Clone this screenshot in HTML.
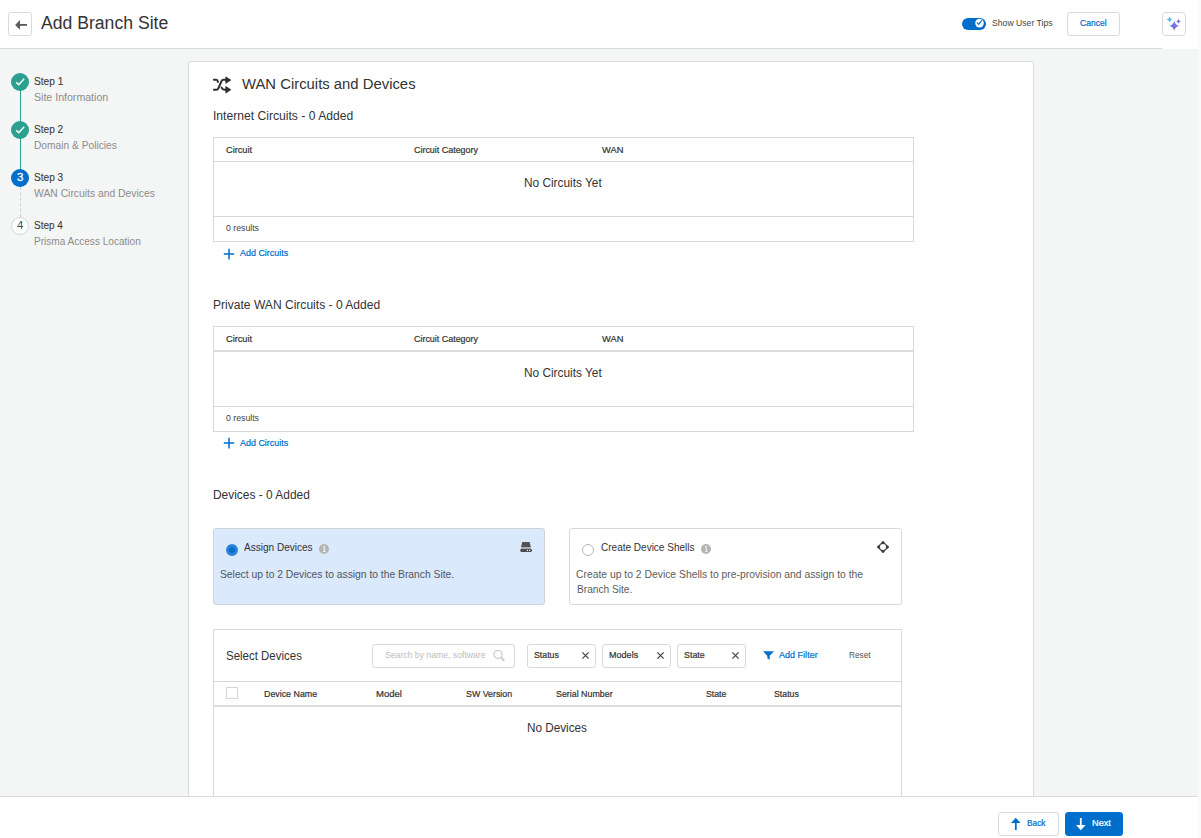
<!DOCTYPE html>
<html lang="en">
<head>
<meta charset="utf-8">
<title>Add Branch Site</title>
<style>
*{box-sizing:border-box;margin:0;padding:0}
html,body{width:1201px;height:838px;overflow:hidden}
body{position:relative;background:#f4f5f5;font-family:"Liberation Sans",sans-serif;color:#333}
.abs{position:absolute}
.t{position:absolute;white-space:nowrap;line-height:1;transform-origin:0 0;display:block}
.sb{-webkit-text-stroke:0.22px currentColor}
.sl{-webkit-text-stroke:0.12px currentColor}
.hdr{position:absolute;left:0;top:0;width:1162px;height:49px;background:#fff;border-bottom:1px solid #d9dbdb}
.hdr-r{position:absolute;left:1162px;top:0;width:36px;height:49px;background:#fff}
.scroll{position:absolute;left:1198px;top:0;width:3px;height:838px;background:#fafafa}
.btn{position:absolute;background:#fff;border:1px solid #d9dbdb;border-radius:3px}
.panel{position:absolute;left:188px;top:61px;width:846px;height:760px;background:#fff;border:1px solid #dcdddd;border-radius:3px}
.tbl{position:absolute;border:1px solid #d8dada;background:#fff}
.hl{position:absolute;background:#d8dada;height:1px}
.footer{position:absolute;left:0;top:796px;width:1198px;height:42px;background:#fff;border-top:1px solid #d9dbdb}
.circ{position:absolute;width:18px;height:18px;border-radius:50%}
.card{position:absolute;border:1px solid #d8dada;border-radius:3px;background:#fff}
.fbox{position:absolute;top:644.4px;height:23.2px;border:1px solid #d8dada;border-radius:3px;background:#fff}
svg{position:absolute;overflow:visible}
</style>
</head>
<body>

<!-- ===== header ===== -->
<div class="hdr"></div>
<div class="hdr-r"></div>
<div class="btn" style="left:8px;top:12px;width:24px;height:24px"></div>
<svg style="left:8px;top:12px" width="24" height="24" viewBox="0 0 24 24"><path d="M7.1 12.9 L12 8.1 V17.7 Z" fill="#5c5c5c"/><path d="M11.5 12.9 H19" stroke="#5c5c5c" stroke-width="1.9" fill="none"/></svg>
<!-- toggle -->
<div class="abs" style="left:962px;top:18px;width:24px;height:12px;border-radius:6px;background:#006fcc"></div>
<svg style="left:974px;top:18px" width="12" height="12" viewBox="0 0 12 12"><circle cx="5.5" cy="5.1" r="4.3" fill="#fff"/><path d="M2.9 4.4 L4.6 6.4 L7.8 2.3" stroke="#006fcc" stroke-width="1.1" fill="none"/></svg>
<div class="btn" style="left:1067.4px;top:12.2px;width:52.4px;height:23.4px"></div>
<div class="btn" style="left:1162px;top:12px;width:24px;height:24px;border-radius:4px"></div>
<svg style="left:1162px;top:12px" width="24" height="24" viewBox="0 0 24 24">
<defs><linearGradient id="g1" x1="0" y1="0" x2="1" y2="1"><stop offset="0.1" stop-color="#4796e4"/><stop offset="0.6" stop-color="#7c6ce0"/><stop offset="1" stop-color="#9a45e0"/></linearGradient></defs>
<path d="M7.60 4.40 Q8.13 6.97 10.70 7.50 Q8.13 8.03 7.60 10.60 Q7.07 8.03 4.50 7.50 Q7.07 6.97 7.60 4.40Z" fill="#47bfe0"/>
<path d="M16.50 7.10 Q16.89 9.01 18.80 9.40 Q16.89 9.79 16.50 11.70 Q16.11 9.79 14.20 9.40 Q16.11 9.01 16.50 7.10Z" fill="#7668dd"/>
<path d="M12.20 8.90 Q13.18 12.82 17.10 13.80 Q13.18 14.78 12.20 18.70 Q11.22 14.78 7.30 13.80 Q11.22 12.82 12.20 8.90Z" fill="url(#g1)"/>
</svg>
<span class="t" style="left:41.0px;top:13.66px;font-size:18px;color:#333333;transform:scaleX(0.9782)">Add Branch Site</span>
<span class="t" style="left:992.0px;top:18.04px;font-size:9.4px;color:#444444;transform:scaleX(0.9223)">Show User Tips</span>
<span class="t sb" style="left:1080.0px;top:18.04px;font-size:9.4px;color:#006fcc;transform:scaleX(0.9095)">Cancel</span>

<!-- ===== sidebar steps ===== -->
<div class="abs" style="left:19.5px;top:90px;width:1.2px;height:80px;background:#2ba08f"></div>
<div class="abs" style="left:19.6px;top:187px;width:0;height:30px;border-left:1px dashed #cdcfcf"></div>
<div class="circ" style="left:11px;top:73px;background:#2ba08f"></div>
<div class="circ" style="left:11px;top:121px;background:#2ba08f"></div>
<div class="circ" style="left:11px;top:169px;background:#006fcc"></div>
<div class="circ" style="left:11px;top:217px;background:#fff;border:1px solid #d4d6d6"></div>
<svg style="left:11px;top:73px" width="18" height="18" viewBox="0 0 18 18"><path d="M5.2 9.3 L7.7 11.7 L13.2 5.7" stroke="#fff" stroke-width="1.5" fill="none"/></svg>
<svg style="left:11px;top:121px" width="18" height="18" viewBox="0 0 18 18"><path d="M5.2 9.3 L7.7 11.7 L13.2 5.7" stroke="#fff" stroke-width="1.5" fill="none"/></svg>
<span class="t" style="left:16.9px;top:172px;font-size:11.5px;color:#fff;-webkit-text-stroke:0.3px #fff">3</span>
<span class="t" style="left:16.9px;top:220px;font-size:11.5px;color:#4a4a4a">4</span>
<span class="t sl" style="left:34.0px;top:76.32px;font-size:11.2px;color:#3c3c3c;transform:scaleX(0.9059)">Step 1</span>
<span class="t" style="left:34.0px;top:92.49px;font-size:11px;color:#8c8c8c;transform:scaleX(0.9630)">Site Information</span>
<span class="t sl" style="left:34.0px;top:124.32px;font-size:11.2px;color:#3c3c3c;transform:scaleX(0.9038)">Step 2</span>
<span class="t" style="left:34.0px;top:140.49px;font-size:11px;color:#8c8c8c;transform:scaleX(0.9281)">Domain &amp; Policies</span>
<span class="t sl" style="left:34.0px;top:172.32px;font-size:11.2px;color:#3c3c3c;transform:scaleX(0.9012)">Step 3</span>
<span class="t" style="left:34.0px;top:188.49px;font-size:11px;color:#8c8c8c;transform:scaleX(0.9405)">WAN Circuits and Devices</span>
<span class="t sl" style="left:34.0px;top:220.32px;font-size:11.2px;color:#3c3c3c;transform:scaleX(0.8895)">Step 4</span>
<span class="t" style="left:34.0px;top:236.49px;font-size:11px;color:#8c8c8c;transform:scaleX(0.9140)">Prisma Access Location</span>

<!-- ===== main panel ===== -->
<div class="panel"></div>
<svg style="left:205px;top:68px" width="40" height="32" viewBox="0 0 40 32">
<g stroke="#2e2e2e" stroke-width="2" fill="none" stroke-linecap="round" stroke-linejoin="round">
<path d="M8.9 11.85 H11.2 Q12.5 11.85 13 13.9"/>
<path d="M8.9 21.75 H11.4 Q12.7 21.75 13.3 20.5 L16.5 13.1 Q17.1 11.85 18.4 11.85 H21.5"/>
<path d="M16.6 19.6 Q17.6 21.75 19.6 21.75 H21.5"/>
</g>
<path d="M20.8 8.9 L25.8 12.1 L20.8 15.3 Z" fill="#2e2e2e" stroke="#2e2e2e" stroke-width="0.8" stroke-linejoin="round"/>
<path d="M20.8 18.5 L25.8 21.75 L20.8 25 Z" fill="#2e2e2e" stroke="#2e2e2e" stroke-width="0.8" stroke-linejoin="round"/>
</svg>

<!-- table 1 -->
<div class="tbl" style="left:213px;top:137px;width:701px;height:105px"></div>
<div class="hl" style="left:214px;top:161px;width:699px"></div>
<div class="hl" style="left:214px;top:216px;width:699px"></div>
<svg style="left:223.2px;top:248.1px" width="12" height="12" viewBox="0 0 12 12"><path d="M6 0.8 V11.4 M0.8 6.1 H11.2" stroke="#006fcc" stroke-width="1.5" fill="none"/></svg>
<!-- table 2 -->
<div class="tbl" style="left:213px;top:326px;width:701px;height:106px"></div>
<div class="hl" style="left:214px;top:350px;width:699px;height:2px;background:#dcdcdc"></div>
<div class="hl" style="left:214px;top:406px;width:699px"></div>
<svg style="left:223.2px;top:437.2px" width="12" height="12" viewBox="0 0 12 12"><path d="M6 0.8 V11.4 M0.8 6.1 H11.2" stroke="#006fcc" stroke-width="1.5" fill="none"/></svg>

<!-- cards -->
<div class="card" style="left:213px;top:528px;width:332px;height:77px;background:#dbe9fc;border-color:#cdd3db"></div>
<div class="abs" style="left:226px;top:544px;width:12px;height:12px;border-radius:50%;background:#006fcc;border:3px solid #2a84d6"></div>
<svg style="left:319px;top:544px" width="10" height="10" viewBox="0 0 10 10"><circle cx="5" cy="5" r="5" fill="#b5b5b5"/><path d="M4.1 4.2 H5.6 V7.2 M4 7.4 H6.4" stroke="#fff" stroke-width="0.9" fill="none"/><circle cx="5" cy="2.6" r="0.8" fill="#fff"/></svg>
<svg style="left:519px;top:541px" width="14" height="12" viewBox="0 0 14 12"><path d="M3.6 1.1 H10.2 Q10.7 1.1 10.8 1.6 L11.9 6.2 H2 L3.1 1.6 Q3.2 1.1 3.6 1.1Z" fill="#545454"/><rect x="2.2" y="6.2" width="9.6" height="1.8" fill="#a4abb8"/><rect x="1.2" y="7.9" width="11.8" height="3" rx="1.3" fill="#4c4c4c"/><circle cx="8.4" cy="9.4" r="0.65" fill="#fff"/><circle cx="10.6" cy="9.4" r="0.65" fill="#fff"/></svg>

<div class="card" style="left:569px;top:528px;width:333px;height:77px"></div>
<div class="abs" style="left:582px;top:544px;width:12px;height:12px;border-radius:50%;background:#fff;border:1px solid #b8b8b8"></div>
<svg style="left:701px;top:544px" width="10" height="10" viewBox="0 0 10 10"><circle cx="5" cy="5" r="5" fill="#b5b5b5"/><path d="M4.1 4.2 H5.6 V7.2 M4 7.4 H6.4" stroke="#fff" stroke-width="0.9" fill="none"/><circle cx="5" cy="2.6" r="0.8" fill="#fff"/></svg>
<svg style="left:876px;top:540px" width="14" height="14" viewBox="0 0 14 14"><path fill-rule="evenodd" fill="#404040" d="M7 1 Q7.8 1 8.3 1.9 Q9.6 4.3 12.1 5.7 Q13 6.2 13 7 Q13 7.8 12.1 8.3 Q9.6 9.7 8.3 12.1 Q7.8 13 7 13 Q6.2 13 5.7 12.1 Q4.4 9.7 1.9 8.3 Q1 7.8 1 7 Q1 6.2 1.9 5.7 Q4.4 4.3 5.7 1.9 Q6.2 1 7 1Z M7 4 A3 3 0 1 0 7 10 A3 3 0 1 0 7 4Z"/></svg>

<!-- select devices -->
<div class="tbl" style="left:213px;top:629px;width:689px;height:200px"></div>
<div class="fbox" style="left:372.4px;width:142.4px"></div>
<svg style="left:493px;top:649px" width="13" height="13" viewBox="0 0 13 13"><circle cx="5" cy="5.4" r="4" stroke="#cdcdcd" stroke-width="1.3" fill="none"/><path d="M8.3 8.8 L10.8 11.4" stroke="#cdcdcd" stroke-width="2" stroke-linecap="round"/></svg>
<div class="fbox" style="left:527.4px;width:68.6px"></div>
<div class="fbox" style="left:602.2px;width:68.6px"></div>
<div class="fbox" style="left:677.1px;width:68.6px"></div>
<svg style="left:582.4px;top:652.4px" width="7" height="7" viewBox="0 0 7 7"><path d="M0.4 0.4 L6.6 6.6 M6.6 0.4 L0.4 6.6" stroke="#484848" stroke-width="1.3"/></svg>
<svg style="left:657.4px;top:652.4px" width="7" height="7" viewBox="0 0 7 7"><path d="M0.4 0.4 L6.6 6.6 M6.6 0.4 L0.4 6.6" stroke="#484848" stroke-width="1.3"/></svg>
<svg style="left:732.4px;top:652.4px" width="7" height="7" viewBox="0 0 7 7"><path d="M0.4 0.4 L6.6 6.6 M6.6 0.4 L0.4 6.6" stroke="#484848" stroke-width="1.3"/></svg>
<svg style="left:762.6px;top:650.6px" width="11" height="9" viewBox="0 0 11 9"><path d="M0.6 0.2 H10.4 Q10.9 0.2 10.6 0.7 L6.7 4.7 V8.8 L4.3 7.3 V4.7 L0.4 0.7 Q0.1 0.2 0.6 0.2Z" fill="#006fcc"/></svg>
<div class="hl" style="left:214px;top:681px;width:687px"></div>
<div class="hl" style="left:214px;top:705px;width:687px;height:2px;background:#dcdcdc"></div>
<div class="abs" style="left:226px;top:687.4px;width:11.8px;height:11.6px;background:#fff;border:1px solid #d4d6d6;border-radius:0"></div>
<span class="t" style="left:242.0px;top:75.88px;font-size:15.5px;color:#333333;transform:scaleX(0.9580)">WAN Circuits and Devices</span>
<span class="t" style="left:213.0px;top:109.62px;font-size:12.5px;color:#333333;transform:scaleX(0.9703)">Internet Circuits - 0 Added</span>
<span class="t" style="left:213.0px;top:298.82px;font-size:12.5px;color:#333333;transform:scaleX(0.9652)">Private WAN Circuits - 0 Added</span>
<span class="t" style="left:213.0px;top:489.02px;font-size:12.5px;color:#333333;transform:scaleX(0.9542)">Devices - 0 Added</span>
<span class="t sb" style="left:226.0px;top:144.70px;font-size:9.8px;color:#333333;transform:scaleX(0.9387)">Circuit</span>
<span class="t sb" style="left:414.0px;top:144.70px;font-size:9.8px;color:#333333;transform:scaleX(0.9109)">Circuit Category</span>
<span class="t sb" style="left:602.0px;top:144.70px;font-size:9.8px;color:#333333;transform:scaleX(0.9531)">WAN</span>
<span class="t" style="left:524.0px;top:176.50px;font-size:12.4px;color:#333333;transform:scaleX(0.9559)">No Circuits Yet</span>
<span class="t" style="left:226.0px;top:222.70px;font-size:9.8px;color:#444444;transform:scaleX(0.8905)">0 results</span>
<span class="t sb" style="left:240.0px;top:248.04px;font-size:9.4px;color:#006fcc;transform:scaleX(0.9545)">Add Circuits</span>
<span class="t sb" style="left:226.0px;top:333.70px;font-size:9.8px;color:#333333;transform:scaleX(0.9387)">Circuit</span>
<span class="t sb" style="left:414.0px;top:333.70px;font-size:9.8px;color:#333333;transform:scaleX(0.9109)">Circuit Category</span>
<span class="t sb" style="left:602.0px;top:333.70px;font-size:9.8px;color:#333333;transform:scaleX(0.9531)">WAN</span>
<span class="t" style="left:524.0px;top:366.50px;font-size:12.4px;color:#333333;transform:scaleX(0.9559)">No Circuits Yet</span>
<span class="t" style="left:226.0px;top:412.70px;font-size:9.8px;color:#444444;transform:scaleX(0.8905)">0 results</span>
<span class="t sb" style="left:240.0px;top:438.04px;font-size:9.4px;color:#006fcc;transform:scaleX(0.9545)">Add Circuits</span>
<span class="t" style="left:244.0px;top:541.69px;font-size:11px;color:#333333;transform:scaleX(0.9122)">Assign Devices</span>
<span class="t" style="left:220.0px;top:568.52px;font-size:11.2px;color:#50555f;transform:scaleX(0.9205)">Select up to 2 Devices to assign to the Branch Site.</span>
<span class="t" style="left:601.0px;top:541.69px;font-size:11px;color:#333333;transform:scaleX(0.9101)">Create Device Shells</span>
<span class="t" style="left:576.0px;top:568.52px;font-size:11.2px;color:#5c5c5c;transform:scaleX(0.9252)">Create up to 2 Device Shells to pre-provision and assign to the</span>
<span class="t" style="left:577.0px;top:583.52px;font-size:11.2px;color:#5c5c5c;transform:scaleX(0.9078)">Branch Site.</span>
<span class="t" style="left:226.0px;top:648.80px;font-size:13px;color:#333333;transform:scaleX(0.8826)">Select Devices</span>
<span class="t" style="left:385.0px;top:650.10px;font-size:9.8px;color:#bdbdbd;transform:scaleX(0.8837)">Search by name, software</span>
<span class="t sb" style="left:534.0px;top:650.10px;font-size:9.8px;color:#333333;transform:scaleX(0.8946)">Status</span>
<span class="t sb" style="left:609.0px;top:650.10px;font-size:9.8px;color:#333333;transform:scaleX(0.9237)">Models</span>
<span class="t sb" style="left:684.0px;top:650.10px;font-size:9.8px;color:#333333;transform:scaleX(0.9056)">State</span>
<span class="t sb" style="left:779.0px;top:650.44px;font-size:9.4px;color:#006fcc;transform:scaleX(0.9640)">Add Filter</span>
<span class="t" style="left:849.0px;top:650.44px;font-size:9.4px;color:#505050;transform:scaleX(0.8835)">Reset</span>
<span class="t sb" style="left:264.0px;top:688.70px;font-size:9.8px;color:#333333;transform:scaleX(0.9030)">Device Name</span>
<span class="t sb" style="left:376.0px;top:688.70px;font-size:9.8px;color:#333333;transform:scaleX(0.9734)">Model</span>
<span class="t sb" style="left:466.0px;top:688.70px;font-size:9.8px;color:#333333;transform:scaleX(0.9000)">SW Version</span>
<span class="t sb" style="left:556.0px;top:688.70px;font-size:9.8px;color:#333333;transform:scaleX(0.9037)">Serial Number</span>
<span class="t sb" style="left:706.0px;top:688.70px;font-size:9.8px;color:#333333;transform:scaleX(0.8904)">State</span>
<span class="t sb" style="left:774.0px;top:688.70px;font-size:9.8px;color:#333333;transform:scaleX(0.8946)">Status</span>
<span class="t" style="left:527.0px;top:722.20px;font-size:12.4px;color:#333333;transform:scaleX(0.9465)">No Devices</span>

<!-- ===== footer ===== -->
<div class="footer"></div>
<div class="btn" style="left:998.2px;top:812.2px;width:60.4px;height:23.4px"></div>
<div class="btn" style="left:1064.9px;top:812.2px;width:58px;height:23.4px;background:#006fcc;border-color:#006fcc"></div>
<svg style="left:1010px;top:817px" width="12" height="14" viewBox="0 0 12 14"><path d="M5.8 13 V3" stroke="#006fcc" stroke-width="1.8" fill="none"/><path d="M1 6 L5.8 0.8 L10.6 6 Z" fill="#006fcc"/></svg>
<svg style="left:1075px;top:817px" width="12" height="14" viewBox="0 0 12 14"><path d="M5.8 1 V11" stroke="#fff" stroke-width="1.8" fill="none"/><path d="M1 8 L5.8 13.2 L10.6 8 Z" fill="#fff"/></svg>
<span class="t sb" style="left:1027.0px;top:818.04px;font-size:9.4px;color:#006fcc;transform:scaleX(0.8879)">Back</span>
<span class="t sb" style="left:1092.0px;top:818.04px;font-size:9.4px;color:#ffffff;transform:scaleX(0.9792)">Next</span>
<div class="scroll"></div>
<div class="abs" style="left:0;top:0;width:1px;height:1px;background:#eff0f2"></div>
</body>
</html>
